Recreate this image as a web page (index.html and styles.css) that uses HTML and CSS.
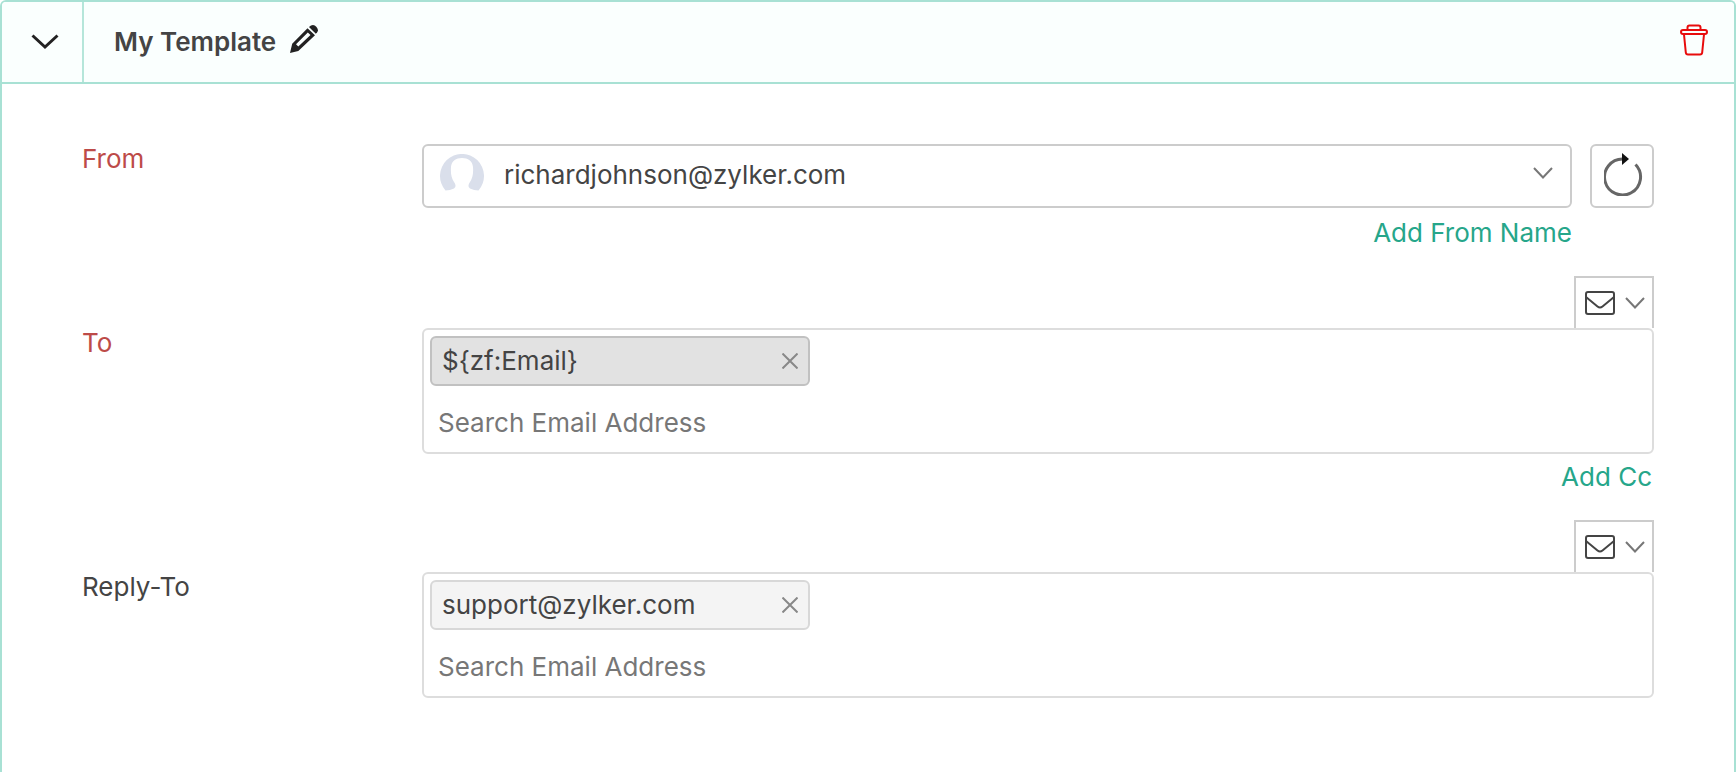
FILE: index.html
```html
<!DOCTYPE html>
<html lang="en">
<head>
<meta charset="utf-8">
<meta name="viewport" content="width=device-width, initial-scale=1">
<title>My Template</title>
<link rel="stylesheet" href="styles.css">
</head>
<body>
<main class="card">
  <header class="card-header">
    <button class="collapse" type="button" aria-label="Collapse template">
      <svg width="28" height="16" viewBox="0 0 28 16" fill="none" stroke="#222" stroke-width="3"><path d="M1.500 1.500 14 13 26.500 1.500"/></svg>
    </button>
    <h1 class="title">My Template</h1>
    <button class="edit" type="button" aria-label="Rename template">
      <svg width="28" height="28" viewBox="0 0 28 28"><path fill="#222" fill-rule="evenodd" d="M17.500 3.300 25 10.200 8.300 26.100 0 28 2.200 18.800ZM17.800 7.500 6 19.200 8.300 21.400 20.500 9.900Z"/><path fill="#222" d="M19 2 21 .5Q24-1 26.500 2 29 5 27.200 7.200L25.800 8.700Z"/></svg>
    </button>
    <button class="delete" type="button" aria-label="Delete template">
      <svg width="30" height="32" viewBox="0 0 30 32" fill="none" stroke="#e80c0c" stroke-width="2"><path d="M8.500 6V3.500Q8.500 1.500 10.500 1.500H19.500Q21.500 1.500 21.500 3.500V6"/><rect x="2" y="6" width="26" height="4" rx="2"/><path d="M5 10.500 6.800 28.500Q7 30.500 9 30.500H21Q23 30.500 23.200 28.500L25 10.500"/></svg>
    </button>
  </header>

  <form class="fields">
    <div class="row">
      <label class="label required" for="from">From</label>
      <div class="field">
        <div class="from-line">
          <div class="select-wrap">
            <svg class="avatar" width="44" height="38" viewBox="0 0 44 38"><path fill="#dadfeb" d="M5.500 36.500A22 22 0 1 1 38.500 36.500Q34 36.500 30 34.500C28 33 28 31 30 28C32.500 24 33.500 20 33 13C32.500 7 28 4 22 4S11.500 7 11 13C10.500 20 11.500 24 14 28C16 31 16 33 14 34.500Q10 36.500 5.500 36.500Z"/></svg>
            <select class="select" id="from"><option>richardjohnson@zylker.com</option></select>
            <svg class="chevron select-arrow" width="20" height="12" viewBox="0 0 20 12"><path d="M1 1 10 10.500 19 1"/></svg>
          </div>
          <button class="refresh" type="button" aria-label="Refresh addresses">
            <svg width="40" height="44" viewBox="0 0 40 44"><path fill="none" stroke="#666" stroke-width="3" d="M19 7A18 18 0 1 0 31.500 12.500"/><path fill="#111" d="M18 1 25 7 18 13Z"/></svg>
          </button>
          <a class="link from-name" href="#">Add From Name</a>
        </div>
      </div>
    </div>

    <div class="row">
      <label class="label required tabbed" for="to">To</label>
      <div class="field">
        <button class="tab" type="button" aria-label="Choose email field">
          <svg class="mail" width="30" height="24" viewBox="0 0 30 24"><rect x="1" y="1" width="28" height="22" rx="2"/><path d="M1 6 12.500 15.500Q15 17.500 17.500 15.500L29 6"/></svg>
          <svg class="chevron" width="20" height="12" viewBox="0 0 20 12"><path d="M1 1 10 10.500 19 1"/></svg>
        </button>
        <div class="box">
          <div class="chip chip-active"><span>${zf:Email}</span>
            <button class="remove" type="button" aria-label="Remove ${zf:Email}"><svg width="16" height="16" viewBox="0 0 16 16"><path d="M.5.5 15.500 15.500M15.500.5.5 15.500"/></svg></button>
          </div>
          <input class="search" id="to" type="text" placeholder="Search Email Address">
        </div>
        <a class="link add-cc" href="#">Add Cc</a>
      </div>
    </div>

    <div class="row">
      <label class="label tabbed" for="reply">Reply-To</label>
      <div class="field">
        <button class="tab" type="button" aria-label="Choose reply email field">
          <svg class="mail" width="30" height="24" viewBox="0 0 30 24"><rect x="1" y="1" width="28" height="22" rx="2"/><path d="M1 6 12.500 15.500Q15 17.500 17.500 15.500L29 6"/></svg>
          <svg class="chevron" width="20" height="12" viewBox="0 0 20 12"><path d="M1 1 10 10.500 19 1"/></svg>
        </button>
        <div class="box">
          <div class="chip"><span>support@zylker.com</span>
            <button class="remove" type="button" aria-label="Remove support@zylker.com"><svg width="16" height="16" viewBox="0 0 16 16"><path d="M.5.5 15.500 15.500M15.500.5.5 15.500"/></svg></button>
          </div>
          <input class="search" id="reply" type="text" placeholder="Search Email Address">
        </div>
      </div>
    </div>
  </form>
</main>
</body>
</html>
```
FILE: styles.css
```css
* { box-sizing: border-box; }

body {
  margin: 0;
  background: #fff;
  color: #444;
  font: 26px/30px Inter, "Open Sans", sans-serif;
}

button, input, select { font: inherit; color: inherit; }

button {
  display: flex;
  align-items: center;
  justify-content: center;
  padding: 0;
  border: 0;
  background: none;
  cursor: pointer;
}

svg { display: block; flex: none; }

.card {
  min-height: 100vh;
  border: 2px solid #a8e1d4;
  border-bottom: 0;
  border-radius: 6px 6px 0 0;
}

.card-header {
  display: flex;
  align-items: center;
  height: 82px;
  padding-right: 25px;
  border-bottom: 2px solid #a8e1d4;
  border-radius: 4px 4px 0 0;
  background: #fafffe;
}

.collapse {
  align-self: stretch;
  width: 82px;
  padding-left: 6px;
  border-right: 2px solid #b5e6da;
}

.title {
  margin: 0 14px 0 30px;
  font-size: 26px;
  line-height: 30px;
  font-weight: 600;
}

.edit { padding-bottom: 6px; }

.delete {
  margin-left: auto;
  padding-bottom: 4px;
}

.fields {
  display: flex;
  flex-direction: column;
  gap: 28px;
  padding: 60px 80px;
}

.row {
  display: grid;
  grid-template-columns: 340px minmax(0, 1fr);
}

.label { align-self: start; }
.required { color: #bd4b48; }
.tabbed { margin-top: 52px; }

.field {
  display: flex;
  flex-direction: column;
}

.from-line {
  display: grid;
  grid-template-columns: minmax(0, 1fr) 64px;
  column-gap: 18px;
  row-gap: 10px;
}

.select-wrap { position: relative; }

.select {
  appearance: none;
  display: block;
  width: 100%;
  height: 64px;
  padding: 0 60px 2px 80px;
  border: 2px solid #ccc;
  border-radius: 6px;
  background: #fff;
  line-height: 40px;
}

.avatar {
  position: absolute;
  left: 18px;
  top: 10px;
}

.select-arrow {
  position: absolute;
  right: 19px;
  top: 23px;
  pointer-events: none;
}

.refresh {
  height: 64px;
  padding: 0 0 4px 4px;
  border: 2px solid #ccc;
  border-radius: 6px;
}

.link {
  justify-self: end;
  align-self: flex-end;
  color: #26a68a;
  text-decoration: none;
}

.add-cc { margin: 8px 2px 0 0; }

.chevron { fill: none; stroke: #777; stroke-width: 2; }
.mail { fill: none; stroke: #444; stroke-width: 2; }

.tab {
  align-self: flex-end;
  gap: 10px;
  width: 80px;
  height: 52px;
  padding-left: 2px;
  border: 2px solid #ccc;
  border-bottom: 0;
}

.box {
  display: flex;
  flex-direction: column;
  align-items: flex-start;
  gap: 12px;
  padding: 6px;
  border: 2px solid #ddd;
  border-radius: 6px;
}

.chip {
  display: flex;
  align-items: center;
  justify-content: space-between;
  width: 380px;
  max-width: 100%;
  height: 50px;
  padding: 0 10px;
  border: 2px solid #d8d8d8;
  border-radius: 6px;
  background: #f4f4f4;
}

.chip-active {
  border-color: #c1c1c1;
  background: #e2e2e2;
}

.remove svg { fill: none; stroke: #888; stroke-width: 2; }

.search {
  width: 100%;
  height: 48px;
  padding: 0 8px;
  border: 0;
  outline: 0;
  background: transparent;
}

.search::placeholder { color: #777; opacity: 1; }
```
